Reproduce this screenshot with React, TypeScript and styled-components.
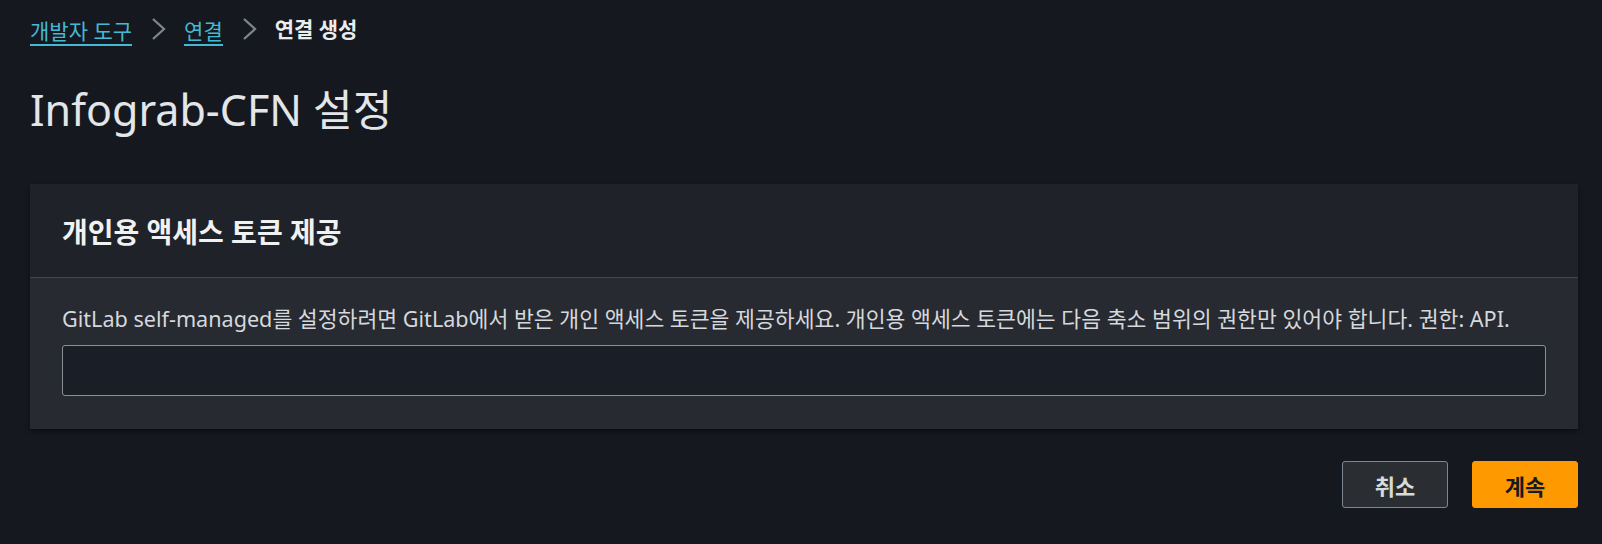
import React from "react";
import styled, { createGlobalStyle } from "styled-components";

const GlobalStyle = createGlobalStyle`
  html, body {
    margin: 0;
    padding: 0;
    background: #16181f;
  }
  body {
    font-family: "Noto Sans", "Noto Sans CJK KR", sans-serif;
    color: #d1d5db;
  }
  * { box-sizing: border-box; }
`;

const Page = styled.div`
  width: 1602px;
  height: 544px;
  padding: 12px 24px 0 30px;
  display: flex;
  flex-direction: column;
`;

const Breadcrumbs = styled.nav`
  display: flex;
  align-items: center;
  height: 34px;
  font-size: 21px;
`;

const Crumb = styled.a`
  color: #44b9d6;
  text-decoration: none;
  border-bottom: 2px solid #44b9d6;
  line-height: 26px;
  padding-top: 1px;
  margin-top: 5px;
`;

const Current = styled.span`
  color: #eaeded;
  font-weight: 700;
  line-height: 26px;
`;

const Sep = styled.span`
  display: inline-flex;
  align-items: center;
  margin: 0 18px 0 19px;
  color: #7d8590;
`;

const Title = styled.h1`
  margin: 35px 0 0 0;
  font-size: 43px;
  font-weight: 400;
  line-height: 58px;
  color: #e3e6e9;
`;

const Card = styled.section`
  margin-top: 45px;
  background: #272a30;
  box-shadow: 0 2px 4px rgba(0, 0, 0, 0.45);
`;

const CardHeader = styled.header`
  height: 94px;
  display: flex;
  align-items: center;
  padding: 0 32px;
  background: #1f2229;
  border-bottom: 1px solid #434850;
`;

const CardTitle = styled.h2`
  margin: 0;
  font-size: 28px;
  font-weight: 700;
  color: #f0f1f2;
`;

const CardBody = styled.div`
  padding: 23px 32px 33px 32px;
`;

const Description = styled.p`
  margin: 0 0 8px 0;
  font-size: 21.6px;
  line-height: 36px;
  color: #d5d8dc;
`;

const Input = styled.input`
  display: block;
  width: 100%;
  height: 51px;
  background: #1a1e26;
  border: 1px solid #8a9099;
  border-radius: 3px;
  color: #d5d8dc;
  font-size: 20px;
  padding: 0 14px;
  outline: none;
`;

const Footer = styled.div`
  display: flex;
  justify-content: flex-end;
  gap: 24px;
  margin-top: 32px;
`;

const Button = styled.button<{ $primary?: boolean }>`
  width: 106px;
  height: 47px;
  border-radius: 3px;
  font-family: "Noto Sans", "Noto Sans CJK KR", sans-serif;
  font-size: 22px;
  font-weight: 700;
  cursor: pointer;
  background: ${(p) => (p.$primary ? "#ff9900" : "#2a2e33")};
  color: ${(p) => (p.$primary ? "#16191f" : "#d5dbdb")};
  border: 1px solid ${(p) => (p.$primary ? "#ff9900" : "#7d8590")};
`;

const Chevron = () => (
  <svg width="15" height="24" viewBox="0 0 15 24" fill="none">
    <polyline points="2,2 13,12 2,22" stroke="#7d8590" strokeWidth="2.3" fill="none" />
  </svg>
);

export default function App() {
  return (
    <>
      <GlobalStyle />
      <Page>
        <Breadcrumbs>
          <Crumb href="#">개발자 도구</Crumb>
          <Sep>
            <Chevron />
          </Sep>
          <Crumb href="#">연결</Crumb>
          <Sep>
            <Chevron />
          </Sep>
          <Current>연결 생성</Current>
        </Breadcrumbs>
        <Title>Infograb-CFN 설정</Title>
        <Card>
          <CardHeader>
            <CardTitle>개인용 액세스 토큰 제공</CardTitle>
          </CardHeader>
          <CardBody>
            <Description>
              GitLab self-managed를 설정하려면 GitLab에서 받은 개인 액세스 토큰을 제공하세요. 개인용 액세스 토큰에는 다음 축소 범위의 권한만 있어야 합니다. 권한: API.
            </Description>
            <Input type="text" />
          </CardBody>
        </Card>
        <Footer>
          <Button>취소</Button>
          <Button $primary>계속</Button>
        </Footer>
      </Page>
    </>
  );
}
